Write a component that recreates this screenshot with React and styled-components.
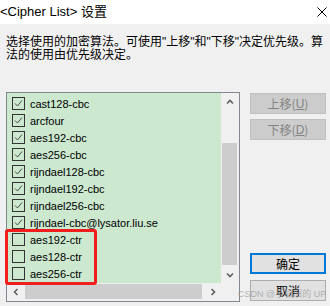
import React from "react";
import styled, { createGlobalStyle } from "styled-components";

const Global = createGlobalStyle`
  html, body { margin: 0; padding: 0; background: #f0f0f0; }
  body { width: 330px; height: 306px; overflow: hidden; font-family: "Liberation Sans", "Noto Sans CJK SC", sans-serif; }
`;

const Window = styled.div`
  position: relative;
  width: 330px;
  height: 306px;
  background: #f0f0f0;
  display: flex;
  flex-direction: column;
`;

const TitleBar = styled.div`
  height: 24px;
  background: #ffffff;
  display: flex;
  align-items: center;
  justify-content: space-between;
  padding-right: 3px;
  box-sizing: border-box;
`;

const Title = styled.div`
  font-size: 13px;
  color: #000;
  white-space: nowrap;
  line-height: 16px;
  margin-top: -1px;
`;

const CloseIcon = styled.svg`
  width: 10px;
  height: 10px;
  margin-top: -1px;
`;

const Body = styled.div`
  padding: 12px 4px 0 6px;
  display: flex;
  flex-direction: column;
`;

const Description = styled.div`
  font-size: 12px;
  line-height: 13px;
  color: #000;
  white-space: nowrap;
  height: 56px;
`;

const Main = styled.div`
  display: flex;
  align-items: flex-start;
`;

const ListBox = styled.div`
  position: relative;
  width: 234px;
  height: 210px;
  box-sizing: border-box;
  border: 1px solid #828790;
  display: grid;
  grid-template-columns: 214px 17px;
  grid-template-rows: 190px 17px;
`;

const Items = styled.div`
  background: #cce8cf;
  padding: 2px 0 0 5px;
  overflow: hidden;
`;

const Row = styled.div`
  height: 17px;
  display: flex;
  align-items: center;
  gap: 5px;
  font-size: 11px;
  color: #000;
  white-space: nowrap;
`;

const Box = styled.span`
  width: 13px;
  height: 13px;
  box-sizing: border-box;
  border: 1px solid #333333;
  display: flex;
  align-items: center;
  justify-content: center;
  flex: none;
`;

const VScroll = styled.div`
  background: #f0f0f0;
  display: flex;
  flex-direction: column;
`;

const HScroll = styled.div`
  background: #f0f0f0;
  display: flex;
`;

const Corner = styled.div`
  background: #f0f0f0;
`;

const ArrowBtn = styled.div`
  width: 17px;
  height: 17px;
  flex: none;
  display: flex;
  align-items: center;
  justify-content: center;
`;

const VTrack = styled.div`
  flex: 1;
  display: flex;
  flex-direction: column;
  padding: 33px 1px 1px 1px;
`;

const VThumb = styled.div`
  flex: 1;
  background: #cdcdcd;
`;

const HTrack = styled.div`
  flex: 1;
  display: flex;
  padding: 1px 2px 1px 1px;
`;

const HThumb = styled.div`
  flex: 1;
  background: #cdcdcd;
`;

const Highlight = styled.div`
  position: absolute;
  left: -2px;
  top: 136px;
  width: 92px;
  height: 56px;
  box-sizing: border-box;
  border: 3px solid #f21d1d;
  border-radius: 3px;
  pointer-events: none;
`;

const Side = styled.div`
  margin-left: 10px;
  height: 209px;
  padding-top: 1px;
  box-sizing: border-box;
  display: flex;
  flex-direction: column;
  justify-content: space-between;
`;

const Group = styled.div`
  display: flex;
  flex-direction: column;
  gap: ${(p) => p.$gap}px;
`;

const Button = styled.div`
  width: 76px;
  height: 21px;
  box-sizing: border-box;
  display: flex;
  align-items: center;
  justify-content: center;
  font-size: 12px;
  font-family: "Noto Sans CJK SC", "Liberation Sans", sans-serif;
  background: ${(p) => (p.$disabled ? "#cccccc" : "#e1e1e1")};
  color: ${(p) => (p.$disabled ? "#838383" : "#000000")};
  border: ${(p) =>
    p.$default ? "2px solid #0078d7" : p.$disabled ? "1px solid #bfbfbf" : "1px solid #adadad"};
`;

const Key = styled.span`
  text-decoration: underline;
  font-family: "Liberation Sans", sans-serif;
  font-size: 12px;
`;

const Watermark = styled.div`
  position: absolute;
  left: 238px;
  top: 287px;
  font-size: 9px;
  color: rgba(150, 150, 150, 0.7);
  white-space: nowrap;
  pointer-events: none;
  font-family: "Liberation Sans", "Noto Sans CJK SC", sans-serif;
`;

const Chevron = ({ dir }) => {
  const pts = {
    up: "1,5.5 4,2.5 7,5.5",
    down: "1,2.5 4,5.5 7,2.5",
    left: "5.5,1 2.5,4 5.5,7",
    right: "2.5,1 5.5,4 2.5,7",
  }[dir];
  return (
    <svg width="8" height="8" viewBox="0 0 8 8">
      <polyline points={pts} fill="none" stroke="#606060" strokeWidth="1.6" />
    </svg>
  );
};

const Check = () => (
  <svg width="11" height="11" viewBox="0 0 11 11">
    <polyline points="2,5.5 4.5,8 9,2.5" fill="none" stroke="#4a4a4a" strokeWidth="1" />
  </svg>
);

const items = [
  ["cast128-cbc", true],
  ["arcfour", true],
  ["aes192-cbc", true],
  ["aes256-cbc", true],
  ["rijndael128-cbc", true],
  ["rijndael192-cbc", true],
  ["rijndael256-cbc", true],
  ["rijndael-cbc@lysator.liu.se", true],
  ["aes192-ctr", false],
  ["aes128-ctr", false],
  ["aes256-ctr", false],
];

export default function App() {
  return (
    <>
      <Global />
      <Window>
        <TitleBar>
          <Title>&lt;Cipher List&gt; 设置</Title>
          <CloseIcon viewBox="0 0 10 10">
            <path d="M0.5 0.5 L9.5 9.5 M9.5 0.5 L0.5 9.5" stroke="#000" strokeWidth="1" />
          </CloseIcon>
        </TitleBar>
        <Body>
          <Description>
            选择使用的加密算法。可使用"上移"和"下移"决定优先级。算
            <br />
            法的使用由优先级决定。
          </Description>
          <Main>
            <ListBox>
              <Items>
                {items.map(([name, on]) => (
                  <Row key={name}>
                    <Box>{on && <Check />}</Box>
                    <span>{name}</span>
                  </Row>
                ))}
              </Items>
              <VScroll>
                <ArrowBtn>
                  <Chevron dir="up" />
                </ArrowBtn>
                <VTrack>
                  <VThumb />
                </VTrack>
                <ArrowBtn>
                  <Chevron dir="down" />
                </ArrowBtn>
              </VScroll>
              <HScroll>
                <ArrowBtn>
                  <Chevron dir="left" />
                </ArrowBtn>
                <HTrack>
                  <HThumb />
                </HTrack>
                <ArrowBtn>
                  <Chevron dir="right" />
                </ArrowBtn>
              </HScroll>
              <Corner />
              <Highlight />
            </ListBox>
            <Side>
              <Group $gap={5}>
                <Button $disabled>
                  上移(<Key>U</Key>)
                </Button>
                <Button $disabled>
                  下移(<Key>D</Key>)
                </Button>
              </Group>
              <Group $gap={6}>
                <Button $default>确定</Button>
                <Button>取消</Button>
              </Group>
            </Side>
          </Main>
        </Body>
        <Watermark>CSDN @手机旧的 UP</Watermark>
      </Window>
    </>
  );
}
